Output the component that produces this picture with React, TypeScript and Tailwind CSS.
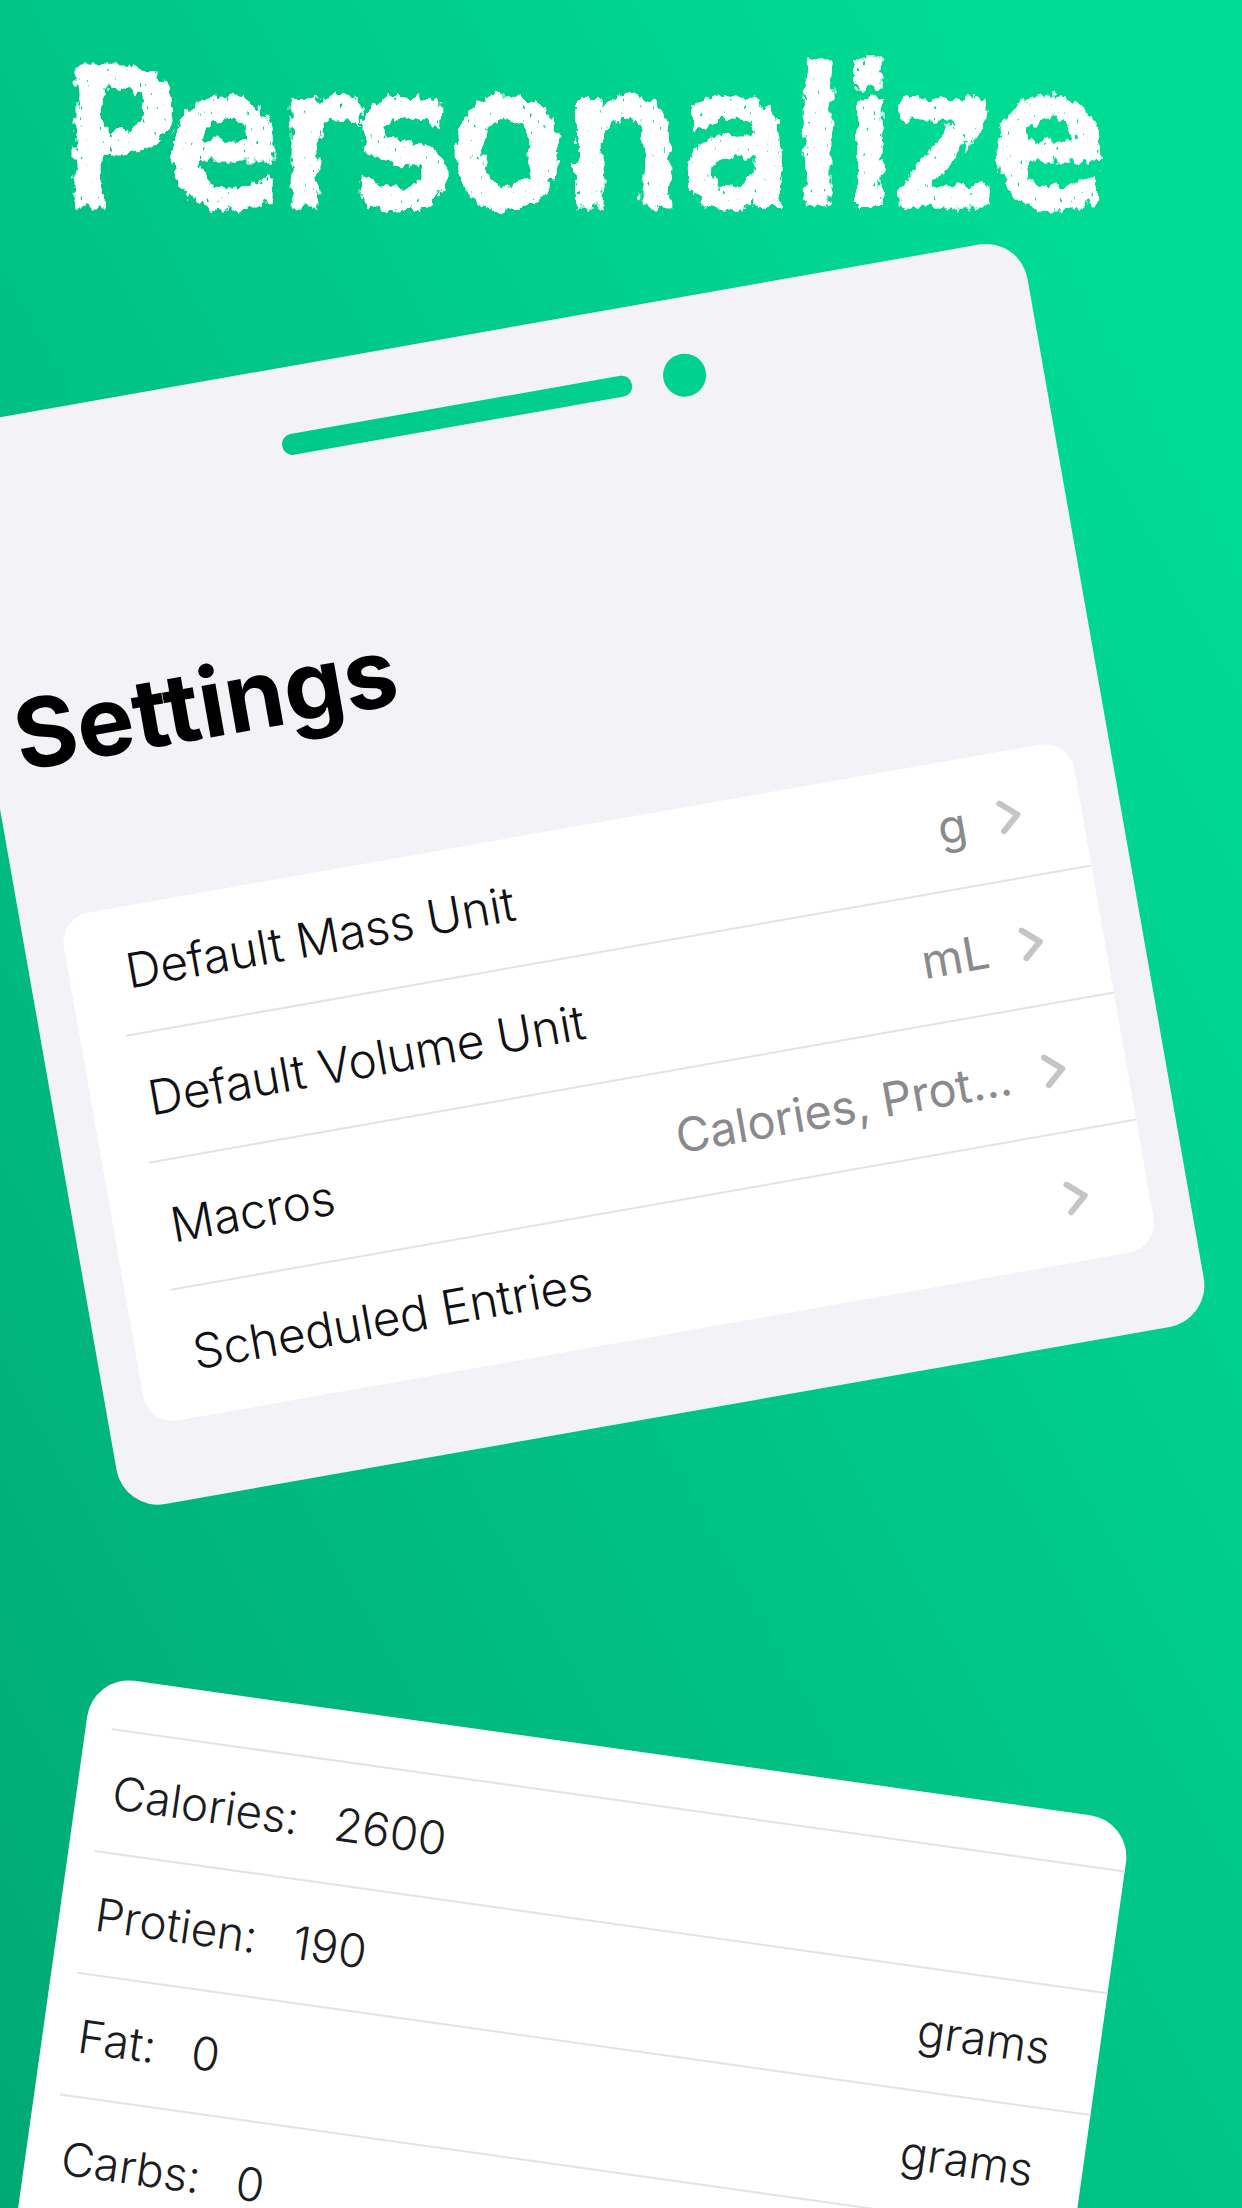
const settings = [
  { label: "Default Mass Unit", value: "g" },
  { label: "Default Volume Unit", value: "mL" },
  { label: "Macros", value: "Calories, Prot..." },
  { label: "Scheduled Entries", value: "" },
];

const macros = [
  { id: "calories", label: "Calories:", value: "2600", unit: "" },
  { id: "protien", label: "Protien:", value: "190", unit: "grams" },
  { id: "fat", label: "Fat:", value: "0", unit: "grams" },
  { id: "carbs", label: "Carbs:", value: "0", unit: "" },
];

function Chevron() {
  return (
    <svg className="h-9 w-6 shrink-0" viewBox="0 0 24 36" fill="none" aria-hidden="true">
      <path
        d="M4 4 L20 18 L4 32"
        stroke="#c5c5c7"
        strokeWidth="6"
        strokeLinecap="round"
        strokeLinejoin="round"
      />
    </svg>
  );
}

/* Roughens the edges of the headline and speckles it like chalk. */
function ChalkFilter() {
  return (
    <svg className="absolute size-0" aria-hidden="true">
      <filter id="chalk" x="-5%" y="-10%" width="110%" height="120%" colorInterpolationFilters="sRGB">
        <feTurbulence type="fractalNoise" baseFrequency="0.12 0.07" numOctaves="3" seed="4" result="noise" />
        <feDisplacementMap in="SourceGraphic" in2="noise" scale="16" xChannelSelector="R" yChannelSelector="G" result="rough" />
        <feTurbulence type="fractalNoise" baseFrequency="0.3 0.14" numOctaves="2" seed="9" result="grain" />
        <feColorMatrix in="grain" type="matrix" values="0 0 0 0 1  0 0 0 0 1  0 0 0 0 1  0 0 0 -14 11.4" result="specks" />
        <feComposite in="rough" in2="specks" operator="in" />
      </filter>
    </svg>
  );
}

function SettingsCard() {
  return (
    <section className="-ml-[67px] w-8/9 origin-top-left -rotate-10 rounded-[42px] bg-[#f2f2f7] px-[39px] pt-14 pb-20">
      <div className="flex items-center justify-center gap-8 pl-2">
        <div className="h-[21px] w-[355px] rounded-[10px] bg-linear-to-r from-[#00c987] to-[#00d18d]" />
        <div className="size-[43px] rounded-full bg-[#00d28e]" />
      </div>
      <h2 className="mt-40 -ml-3 text-[96px] leading-[116px] font-bold text-black">Settings</h2>
      <ul className="mt-32 overflow-hidden rounded-[30px] bg-white">
        {settings.map((row) => (
          <li key={row.label} className="group pl-[46px]">
            <button
              type="button"
              className="flex h-[129px] w-full items-center border-b-2 border-[#e3e3e5] pt-[3px] pr-[60px] pl-[11px] text-left text-[48px] font-light group-last:border-transparent"
            >
              <span className="grow text-[#111113]">{row.label}</span>
              <span className="mr-8 text-[47px] font-normal text-[#8a8a8e]">{row.value}</span>
              <Chevron />
            </button>
          </li>
        ))}
      </ul>
    </section>
  );
}

function MacrosCard() {
  return (
    <section className="mt-[147px] ml-[93px] w-[84.5%] origin-top-left rotate-8 rounded-t-[42px] bg-white pt-[50px] pb-32 pl-[26px]">
      {macros.map((row) => (
        <div
          key={row.id}
          className="flex h-[123px] items-center border-t-2 border-[#e3e3e5] pt-[2px] pr-[50px] pl-[10px] text-[46px] font-light text-[#1c1c1e]"
        >
          <label htmlFor={row.id}>{row.label}</label>
          <input
            id={row.id}
            type="text"
            inputMode="numeric"
            defaultValue={row.value}
            className="ml-9 w-40 grow bg-transparent outline-none"
          />
          <span>{row.unit}</span>
        </div>
      ))}
    </section>
  );
}

export default function App() {
  return (
    <main className="relative h-screen overflow-hidden bg-linear-to-tr from-[#00a973] to-[#00db94] to-88% font-['Inter','Liberation_Sans',sans-serif]">
      <ChalkFilter />
      <header className="h-[429px] pt-[32px]">
        <h1 className="pl-[62px] font-['Chalkduster','DejaVu_Sans',sans-serif] text-[184px] leading-[214px] whitespace-nowrap text-white filter-[url(#chalk)] [-webkit-text-stroke:9px_white]">
          Personalize
        </h1>
      </header>
      <SettingsCard />
      <MacrosCard />
    </main>
  );
}
